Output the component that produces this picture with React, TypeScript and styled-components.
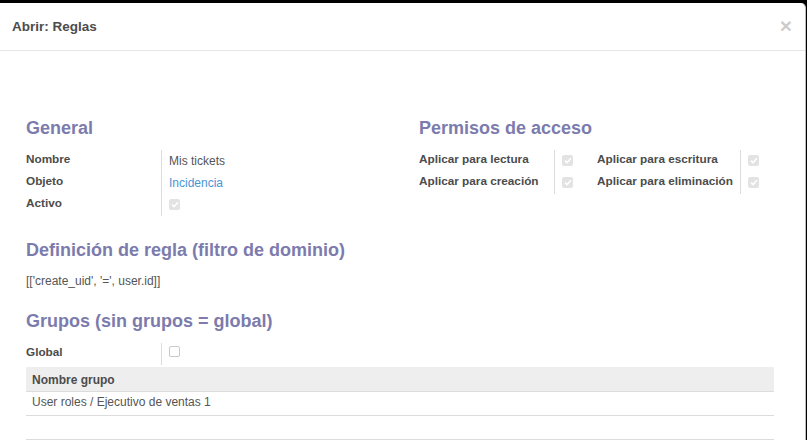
import React from "react";
import styled, { createGlobalStyle } from "styled-components";

const GlobalStyle = createGlobalStyle`
  html, body {
    margin: 0;
    padding: 0;
    background: #000;
    font-family: "Liberation Sans", Arial, Helvetica, sans-serif;
  }
`;

const Modal = styled.div`
  margin-top: 3px;
  width: 805px;
  height: 437px;
  background: #fff;
  border-right: 1px solid #bdbdbd;
  border-top-right-radius: 5px;
  overflow: hidden;
`;

const Header = styled.div`
  display: flex;
  align-items: center;
  justify-content: space-between;
  height: 48px;
  padding: 0 13px 0 12px;
  border-bottom: 1px solid #e5e5e5;
  box-sizing: border-box;

  h4 {
    margin: 0;
    font-size: 13.5px;
    font-weight: bold;
    color: #4c4c4c;
  }
`;

const Close = styled.span`
  font-size: 21px;
  font-weight: bold;
  line-height: 1;
  color: #000;
  opacity: 0.2;
  margin-top: -2px;
`;

const Body = styled.div`
  padding: 65px 31px 0 26px;
`;

const Columns = styled.div`
  display: grid;
  grid-template-columns: 355px 355px;
  column-gap: 38px;
`;

const Heading = styled.h2<{ $gap?: number }>`
  margin: ${(p) => p.$gap ?? 0}px 0 10px;
  font-size: 18px;
  line-height: 24px;
  font-weight: bold;
  color: #7c7bad;
`;

const Group = styled.div`
  display: flex;
`;

const Fields = styled.div<{ $labelWidth?: number; $width?: number }>`
  display: grid;
  grid-template-columns: ${(p) => p.$labelWidth ?? 135}px 1fr;
  grid-auto-rows: 22px;
  width: ${(p) => (p.$width ? `${p.$width}px` : "auto")};
`;

const Label = styled.div`
  padding-top: 2px;
  font-size: 11.75px;
  line-height: 14px;
  font-weight: bold;
  color: #4c4c4c;
  white-space: nowrap;
`;

const Value = styled.div<{ $link?: boolean }>`
  border-left: 1px solid #dcdcdc;
  padding: 4px 0 0 7px;
  font-size: 12px;
  line-height: 14px;
  color: ${(p) => (p.$link ? "#4a94d4" : "#555")};
`;

const Box = styled.span<{ $checked?: boolean }>`
  display: inline-flex;
  align-items: center;
  justify-content: center;
  width: 11px;
  height: 11px;
  border-radius: 2px;
  box-sizing: border-box;
  background: ${(p) => (p.$checked ? "#e3e3e3" : "#fff")};
  border: 1px solid ${(p) => (p.$checked ? "#e3e3e3" : "#c9c9c9")};
`;

const CheckValue = styled(Value)`
  padding-top: 3px;
`;

const Domain = styled.div`
  margin: 12px 0 21px;
  font-size: 12px;
  line-height: 14px;
  color: #555;
`;

const Table = styled.div`
  margin-top: 2px;
  width: 748px;
`;

const TableHead = styled.div`
  height: 25px;
  box-sizing: border-box;
  display: flex;
  align-items: center;
  padding: 1px 6px 0;
  background: #eee;
  border-bottom: 1px solid #dcdcdc;
  font-size: 12px;
  font-weight: bold;
  color: #4c4c4c;
`;

const TableRow = styled.div`
  height: 24px;
  display: flex;
  align-items: center;
  padding: 0 6px 3px;
  box-sizing: border-box;
  border-bottom: 1px solid #dcdcdc;
  font-size: 12px;
  color: #555;
`;

const Check = ({ checked }: { checked?: boolean }) => (
  <Box $checked={checked}>
    {checked && (
      <svg width="8" height="7" viewBox="0 0 8 7">
        <path d="M1 3.6 L3 5.6 L7 1.2" fill="none" stroke="#fff" strokeWidth="1.5" />
      </svg>
    )}
  </Box>
);

const App = () => {
  return (
    <>
      <GlobalStyle />
      <Modal>
        <Header>
          <h4>Abrir: Reglas</h4>
          <Close>×</Close>
        </Header>
        <Body>
          <Columns>
            <div>
              <Heading>General</Heading>
              <Fields>
                <Label>Nombre</Label>
                <Value>Mis tickets</Value>
                <Label>Objeto</Label>
                <Value $link>Incidencia</Value>
                <Label>Activo</Label>
                <CheckValue>
                  <Check checked />
                </CheckValue>
              </Fields>
            </div>
            <div>
              <Heading>Permisos de acceso</Heading>
              <Group>
                <Fields $labelWidth={135} $width={178}>
                  <Label>Aplicar para lectura</Label>
                  <CheckValue>
                    <Check checked />
                  </CheckValue>
                  <Label>Aplicar para creación</Label>
                  <CheckValue>
                    <Check checked />
                  </CheckValue>
                </Fields>
                <Fields $labelWidth={143}>
                  <Label>Aplicar para escritura</Label>
                  <CheckValue>
                    <Check checked />
                  </CheckValue>
                  <Label>Aplicar para eliminación</Label>
                  <CheckValue>
                    <Check checked />
                  </CheckValue>
                </Fields>
              </Group>
            </div>
          </Columns>

          <Heading $gap={22}>Definición de regla (filtro de dominio)</Heading>
          <Domain>[['create_uid', '=', user.id]]</Domain>

          <Heading>Grupos (sin grupos = global)</Heading>
          <Fields>
            <Label>Global</Label>
            <CheckValue>
              <Check />
            </CheckValue>
          </Fields>
          <Table>
            <TableHead>Nombre grupo</TableHead>
            <TableRow>User roles / Ejecutivo de ventas 1</TableRow>
            <TableRow />
          </Table>
        </Body>
      </Modal>
    </>
  );
};

export default App;
